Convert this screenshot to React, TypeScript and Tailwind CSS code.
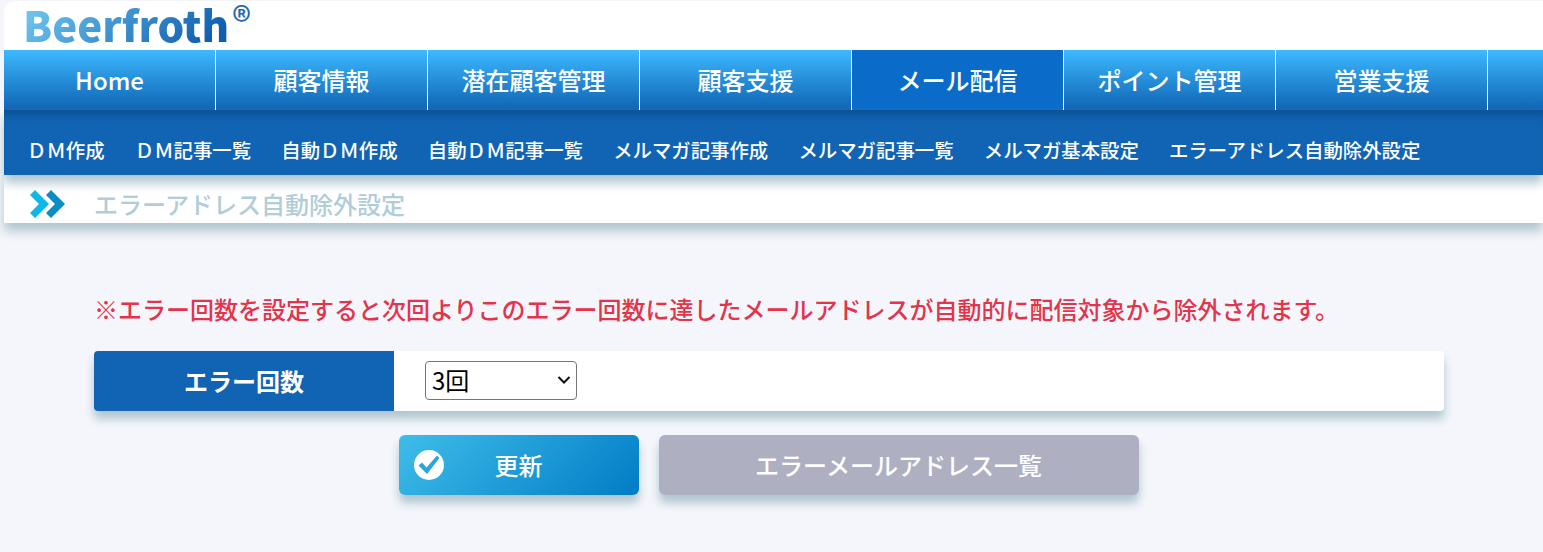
const mainTabs = ['Home', '顧客情報', '潜在顧客管理', '顧客支援', 'メール配信', 'ポイント管理', '営業支援'];

const subTabs = [
  'ＤＭ作成',
  'ＤＭ記事一覧',
  '自動ＤＭ作成',
  '自動ＤＭ記事一覧',
  'メルマガ記事作成',
  'メルマガ記事一覧',
  'メルマガ基本設定',
  'エラーアドレス自動除外設定',
];

function DoubleChevron() {
  return (
    <svg width="38" height="30" viewBox="0 0 38 30" className="shrink-0">
      <path d="M1 6 L6 1 L20 15 L6 29 L1 24 L10 15 Z" fill="#0cb8ea" />
      <path d="M17 6 L22 1 L36 15 L22 29 L17 24 L26 15 Z" fill="#0a8cc4" />
    </svg>
  );
}

function CheckCircle() {
  return (
    <svg width="30" height="30" viewBox="0 0 30 30" className="shrink-0">
      <circle cx="15" cy="15" r="15" fill="#ffffff" />
      <path d="M4.5 15.5 L8 12.5 L12.5 17.5 L23 5.5 L25.5 8 L13 24 Z" fill="#2aa5de" />
    </svg>
  );
}

export default function App() {
  return (
    <div className="min-h-[552px] bg-[#f4f6fb] pl-1 pt-px font-['Noto_Sans_CJK_JP','Noto_Sans',sans-serif] text-black overflow-hidden">
      <header className="flex h-[49px] items-start rounded-tl-[10px] bg-white pl-[19px]">
        {/* logo is text with a gradient fill, the mark sits beside it */}
        <span className="bg-[linear-gradient(135deg,#74ccf4,#0f5fae_90%)] bg-clip-text text-[42px] leading-[46px] font-black text-transparent">
          Beerfroth
        </span>
        <span className="ml-[3px] mt-[-2px] text-[38px] leading-[40px] font-medium text-[#1d6ab5]">®</span>
      </header>

      <nav className="flex h-[60px] bg-gradient-to-b from-[#3dbaff] to-[#1064b3]">
        {mainTabs.map((tab) => (
          <a
            key={tab}
            className={`flex w-[212px] items-center justify-center border-r border-white text-[24px] font-medium text-white ${
              tab === 'メール配信' ? 'bg-[#0a6cc8]' : ''
            }`}
          >
            {tab}
          </a>
        ))}
      </nav>

      <div className="relative z-10 flex h-[65px] items-center gap-[30.2px] bg-[#1064b3] pl-[23px] pt-[14px] text-[19.4px] font-medium text-white shadow-[0_8px_10px_#b0c5cf,inset_0_10px_8px_-6px_rgba(8,70,125,0.7)]">
        {subTabs.map((tab) => (
          <a key={tab} className="whitespace-nowrap">
            {tab}
          </a>
        ))}
      </div>

      <div className="flex h-[48px] items-center gap-[27px] bg-white pl-[25px] pt-[10px] shadow-[0_8px_10px_#b0c5cf]">
        <DoubleChevron />
        <h1 className="text-[24px] font-medium text-[#b0cdd8]">エラーアドレス自動除外設定</h1>
      </div>

      <main className="ml-[90px] w-[1350px] pt-[68px]">
        <p className="text-[24px] leading-[36px] font-medium text-[#e3344c]">
          ※エラー回数を設定すると次回よりこのエラー回数に達したメールアドレスが自動的に配信対象から除外されます。
        </p>

        <div className="mt-[24px] flex h-[60px] rounded-[4px] bg-white shadow-[0_8px_10px_#b0c5cf]">
          <div className="flex w-[300px] items-center justify-center rounded-l-[4px] bg-[#1064b3] text-[24px] font-bold text-white">
            エラー回数
          </div>
          <div className="flex items-center pb-[2px] pl-[31px]">
            <div className="relative">
              <select
                defaultValue="3"
                className="block h-[39px] w-[152px] appearance-none rounded-[4px] border border-[#767676] bg-white pl-[6px] text-[24px] text-black"
              >
                <option value="1">1回</option>
                <option value="2">2回</option>
                <option value="3">3回</option>
                <option value="4">4回</option>
                <option value="5">5回</option>
              </select>
              <svg width="14" height="10" viewBox="0 0 14 10" className="pointer-events-none absolute right-[6px] top-[14px]">
                <path d="M1.5 2 L7 7.5 L12.5 2" fill="none" stroke="#111111" strokeWidth="2" />
              </svg>
            </div>
          </div>
        </div>

        <div className="mt-[24px] flex justify-center gap-[20px] pr-[1px]">
          <button className="relative flex h-[60px] w-[240px] items-center justify-center rounded-[6px] bg-[linear-gradient(135deg,#3fbde9,#007cc6)] text-[24px] font-medium text-white shadow-[0_8px_10px_#b0c5cf]">
            <span className="absolute left-[15px] top-[15px]">
              <CheckCircle />
            </span>
            更新
          </button>
          <button className="flex h-[60px] w-[480px] items-center justify-center rounded-[6px] bg-[#aeb0c1] text-[24px] font-medium text-white shadow-[0_8px_10px_#b0c5cf]">
            エラーメールアドレス一覧
          </button>
        </div>
      </main>
    </div>
  );
}
